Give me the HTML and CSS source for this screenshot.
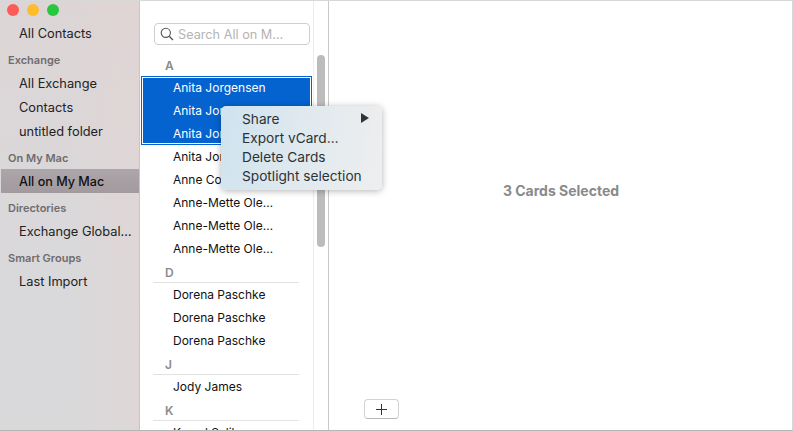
FILE: index.html
```html
<!DOCTYPE html>
<html lang="en">
<head>
<meta charset="utf-8">
<title>Contacts</title>
<link rel="stylesheet" href="styles.css">
</head>
<body>
<div class="window">
  <aside class="sidebar">
    <div class="lights"><span class="light red"></span><span class="light yellow"></span><span class="light green"></span></div>
    <div class="side-item">All Contacts</div>
    <div class="side-head">Exchange</div>
    <div class="side-item">All Exchange</div>
    <div class="side-item">Contacts</div>
    <div class="side-item">untitled folder</div>
    <div class="side-head">On My Mac</div>
    <div class="side-item active">All on My Mac</div>
    <div class="side-head">Directories</div>
    <div class="side-item">Exchange Global…</div>
    <div class="side-head">Smart Groups</div>
    <div class="side-item">Last Import</div>
  </aside>
  <section class="list">
    <div class="search-wrap">
      <div class="search">
        <svg class="search-icon" width="14" height="14" viewBox="0 0 14 14"><circle cx="5.8" cy="5.8" r="4.6" fill="none" stroke="#555" stroke-width="1.1"/><path d="M9.2 9.2 13 13" stroke="#555" stroke-width="1.3" fill="none"/></svg>
        <span>Search All on M…</span>
      </div>
    </div>
    <div class="cards">
      <div class="letter first">A</div>
      <div class="selection">
        <div class="row">Anita Jorgensen</div>
        <div class="row">Anita Jorgensen</div>
        <div class="row">Anita Jorgensen</div>
      </div>
      <div class="row">Anita Jorgensen</div>
      <div class="row">Anne Cook</div>
      <div class="row">Anne-Mette Ole…</div>
      <div class="row">Anne-Mette Ole…</div>
      <div class="row">Anne-Mette Ole…</div>
      <div class="letter">D</div>
      <div class="row">Dorena Paschke</div>
      <div class="row">Dorena Paschke</div>
      <div class="row">Dorena Paschke</div>
      <div class="letter">J</div>
      <div class="row">Jody James</div>
      <div class="letter">K</div>
      <div class="row">Kamal Salib</div>
    </div>
  </section>
  <div class="scroll"><div class="thumb"></div></div>
  <main class="detail">
    <div class="count">3 Cards Selected</div>
    <button class="add" type="button"><svg width="11" height="11" viewBox="0 0 11 11"><path d="M5.5 0v11M0 5.5h11" stroke="#333" stroke-width="1" fill="none"/></svg></button>
  </main>
  <nav class="menu">
    <div class="menu-item">Share<span class="arrow"></span></div>
    <div class="menu-item">Export vCard…</div>
    <div class="menu-item">Delete Cards</div>
    <div class="menu-item">Spotlight selection</div>
  </nav>
</div>
</body>
</html>
```
FILE: styles.css
```css
* { box-sizing: border-box; }
html, body { margin: 0; padding: 0; }
body { width: 793px; height: 431px; overflow: hidden; background: #fff; font-family: Inter, "Liberation Sans", sans-serif; color: #111; }
.window { position: relative; display: flex; width: 793px; height: 431px; overflow: hidden; border-bottom: 1px solid #b5b5b5; border-top: 1px solid #d8d8d8; border-right: 1px solid #d8d8d8; }
.sidebar { width: 140px; flex: none; background: linear-gradient(90deg, rgba(226,212,212,0) 55%, rgba(226,212,212,.6) 100%), linear-gradient(180deg, #ddd5d5 0%, #dad8da 50%, #d9d9da 100%); border-right: 1px solid #c6c6c6; font-size: 12.8px; color: #222; }
.lights { display: flex; gap: 8px; height: 20px; padding: 3px 0 0 7px; }
.light { width: 12px; height: 12px; border-radius: 50%; }
.red { background: #fb5c57; }
.yellow { background: #fdbb2e; }
.green { background: #29c73f; }
.side-item { height: 24px; line-height: 26px; padding-left: 19px; white-space: nowrap; }
.side-head { height: 26px; padding: 4px 0 0 8px; line-height: 22px; font-size: 11px; font-weight: 600; color: #6f6c6e; }
.active { margin-left: 1px; padding-left: 18px; background: linear-gradient(180deg, #aca5a9, #a29a9e); font-size: 12.6px; font-weight: 500; color: #111; }
.list { width: 173px; flex: none; font-size: 12px; overflow: hidden; }
.search-wrap { height: 54px; padding: 22px 0 0 14px; }
.search { display: flex; align-items: center; gap: 4px; width: 156px; height: 22px; padding-left: 5px; border: 1px solid #cfcfcf; border-radius: 4px; font-size: 12.7px; color: #b4b4b4; white-space: nowrap; }
.search-icon { flex: none; }
.letter { height: 23px; padding: 2px 0 0 12px; line-height: 22px; margin: 0 14px 0 13px; border-bottom: 1px solid #e2e2e2; font-size: 12px; font-weight: 600; color: #8b8b8b; }
.letter.first { padding-top: 0; border-bottom: 0; }
.row { height: 23px; line-height: 23px; padding-left: 33px; white-space: nowrap; }
.selection { margin: -2px 1px 0 1px; height: 69px; background: #0563d0; box-shadow: inset 0 0 0 1px #0563d0, inset 0 0 0 2px #fff; color: #fff; }
.selection .row { padding-left: 32px; }
.scroll { width: 16px; flex: none; border-left: 1px solid #ececec; border-right: 1px solid #c9c9c9; padding: 54px 0 0 3px; }
.thumb { width: 8px; height: 192px; border-radius: 4px; background: #bcbcbc; }
.detail { flex: 1; display: flex; flex-direction: column; align-items: flex-start; padding: 179px 0 11px 35px; }
.count { width: 394px; text-align: center; line-height: 22px; font-size: 14px; font-weight: 700; color: #8a8a8a; }
.add { display: flex; align-items: center; justify-content: center; width: 35px; height: 20px; margin-top: auto; padding: 0; background: #fff; border: 1px solid #d2d2d2; border-bottom-color: #b8b8b8; border-radius: 4px; }
.menu { position: absolute; left: 221px; top: 105px; width: 161px; height: 84px; padding: 4px 0 0 21px; border-radius: 5px; background: linear-gradient(100deg, #cfe3ee 0%, #e0e9ee 50%, #eeeeee 100%); box-shadow: 0 1px 7px rgba(0,0,0,.3); font-size: 13.7px; color: #2c3338; }
.menu-item { position: relative; height: 19px; line-height: 19px; white-space: nowrap; }
.arrow { position: absolute; right: 13px; top: 3px; width: 0; height: 0; border-left: 8px solid #333; border-top: 5.5px solid transparent; border-bottom: 5.5px solid transparent; }
```
